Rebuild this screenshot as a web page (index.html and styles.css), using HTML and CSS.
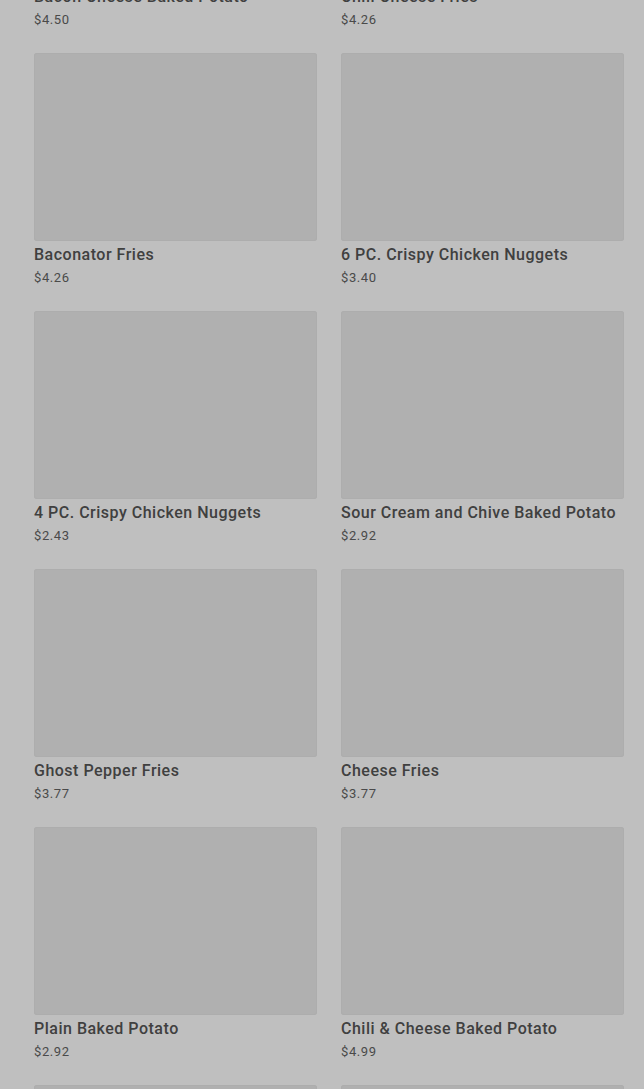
FILE: index.html
```html
<!DOCTYPE html>
<html>
<head>
<meta charset="utf-8">
<link rel="stylesheet" href="styles.css">
</head>
<body>
<main class="menu">
  <div class="card"><div class="thumb"></div><div class="name">Bacon Cheese Baked Potato</div><div class="price">$4.50</div></div>
  <div class="card"><div class="thumb"></div><div class="name">Chili Cheese Fries</div><div class="price">$4.26</div></div>
  <div class="card"><div class="thumb"></div><div class="name">Baconator Fries</div><div class="price">$4.26</div></div>
  <div class="card"><div class="thumb"></div><div class="name">6 PC. Crispy Chicken Nuggets</div><div class="price">$3.40</div></div>
  <div class="card"><div class="thumb"></div><div class="name">4 PC. Crispy Chicken Nuggets</div><div class="price">$2.43</div></div>
  <div class="card"><div class="thumb"></div><div class="name">Sour Cream and Chive Baked Potato</div><div class="price">$2.92</div></div>
  <div class="card"><div class="thumb"></div><div class="name">Ghost Pepper Fries</div><div class="price">$3.77</div></div>
  <div class="card"><div class="thumb"></div><div class="name">Cheese Fries</div><div class="price">$3.77</div></div>
  <div class="card"><div class="thumb"></div><div class="name">Plain Baked Potato</div><div class="price">$2.92</div></div>
  <div class="card"><div class="thumb"></div><div class="name">Chili &amp; Cheese Baked Potato</div><div class="price">$4.99</div></div>
  <div class="card"><div class="thumb"></div><div class="name">Small Fries</div><div class="price">$2.19</div></div>
  <div class="card"><div class="thumb"></div><div class="name">Medium Fries</div><div class="price">$2.59</div></div>
</main>
</body>
</html>
```
FILE: styles.css
```css
html, body {
  margin: 0;
  padding: 0;
  background: #bfbfbf;
  overflow: hidden;
}
body {
  font-family: Roboto, "Liberation Sans", sans-serif;
  height: 1089px;
}
.menu {
  display: grid;
  grid-template-columns: 283px 283px;
  column-gap: 24px;
  row-gap: 23px;
  padding: 0 20px 0 34px;
  margin-top: -205px;
}
.card {
  display: flex;
  flex-direction: column;
}
.thumb {
  height: 188px;
  background: #b0b0b0;
  border-radius: 3px;
  box-shadow: inset 0 0 0 1px #adadad;
}
.name {
  margin-top: 2px;
  font-size: 16px;
  line-height: 24px;
  font-weight: 500;
  letter-spacing: 0.5px;
  color: #404040;
  white-space: nowrap;
}
.price {
  margin-top: 1px;
  font-size: 13px;
  line-height: 20px;
  letter-spacing: 0.6px;
  color: #4a4a4a;
}
```
